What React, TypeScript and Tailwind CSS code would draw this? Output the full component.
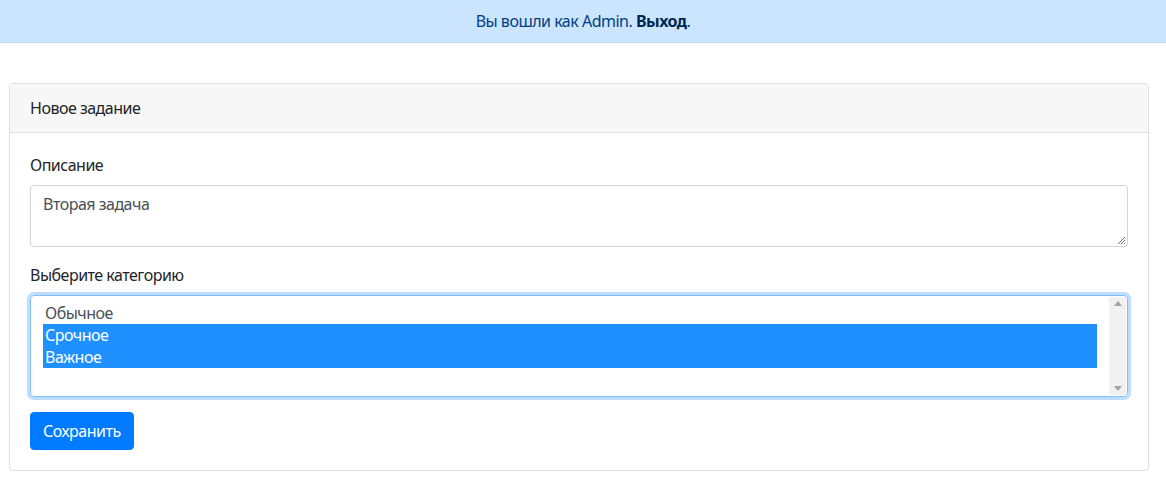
import React from "react";

export default function App() {
  const font = { fontFamily: '"Noto Sans", "Open Sans", sans-serif' };
  return (
    <div className="min-h-[482px] bg-white text-[16px] leading-[24px] tracking-[-0.5px] text-[#212529]" style={font}>
      <div className="h-[43px] bg-[#cce5ff] border-b border-[#b8daff] flex items-center justify-center text-[#004085]">
        <span>
          Вы вошли как Admin. <b className="font-bold text-[#002752]">Выход</b>.
        </span>
      </div>
      <div className="pt-[40px] pl-[9px]">
        <div className="w-[1140px] border border-[#dfdfdf] rounded-[4px] bg-white">
          <div className="h-[49px] bg-[#f7f7f7] border-b border-[#dfdfdf] rounded-t-[4px] px-[20px] flex items-center">
            Новое задание
          </div>
          <div className="px-[20px] pt-[20px] pb-[20px]">
            <div className="mb-[8px]">Описание</div>
            <div className="relative h-[62px] border border-[#ced4da] rounded-[4px] px-[12px] py-[6px] text-[#495057] mb-[16px]">
              Вторая задача
              <svg className="absolute right-[1px] bottom-[1px]" width="10" height="10" viewBox="0 0 10 10">
                <path d="M9 2 L2 9 M9 5 L5 9 M9 8 L8 9" stroke="#6b6b6b" strokeWidth="1" />
              </svg>
            </div>
            <div className="mb-[8px]">Выберите категорию</div>
            <div className="h-[102px] border border-[#80bdff] rounded-[4px] shadow-[0_0_0_3px_rgba(0,123,255,0.25)] flex mb-[15px]">
              <div className="flex-1 pl-[12px] pt-[6px] pr-[12px] text-[#495057] leading-[22px]">
                <div className="pl-[2px]">Обычное</div>
                <div className="pl-[2px] bg-[#1e90ff] text-white">Срочное</div>
                <div className="pl-[2px] bg-[#1e90ff] text-white">Важное</div>
              </div>
              <div className="w-[17px] bg-[#f1f1f1] flex flex-col justify-between items-center py-[4px] mr-[1px] my-[1px]">
                <svg width="8" height="5" viewBox="0 0 8 5"><path d="M0 5 L4 0 L8 5 Z" fill="#a3a3a3" /></svg>
                <svg width="8" height="5" viewBox="0 0 8 5"><path d="M0 0 L4 5 L8 0 Z" fill="#a3a3a3" /></svg>
              </div>
            </div>
            <button className="h-[38px] px-[12px] bg-[#007bff] text-white rounded-[4px] border border-[#007bff]">
              Сохранить
            </button>
          </div>
        </div>
      </div>
    </div>
  );
}
